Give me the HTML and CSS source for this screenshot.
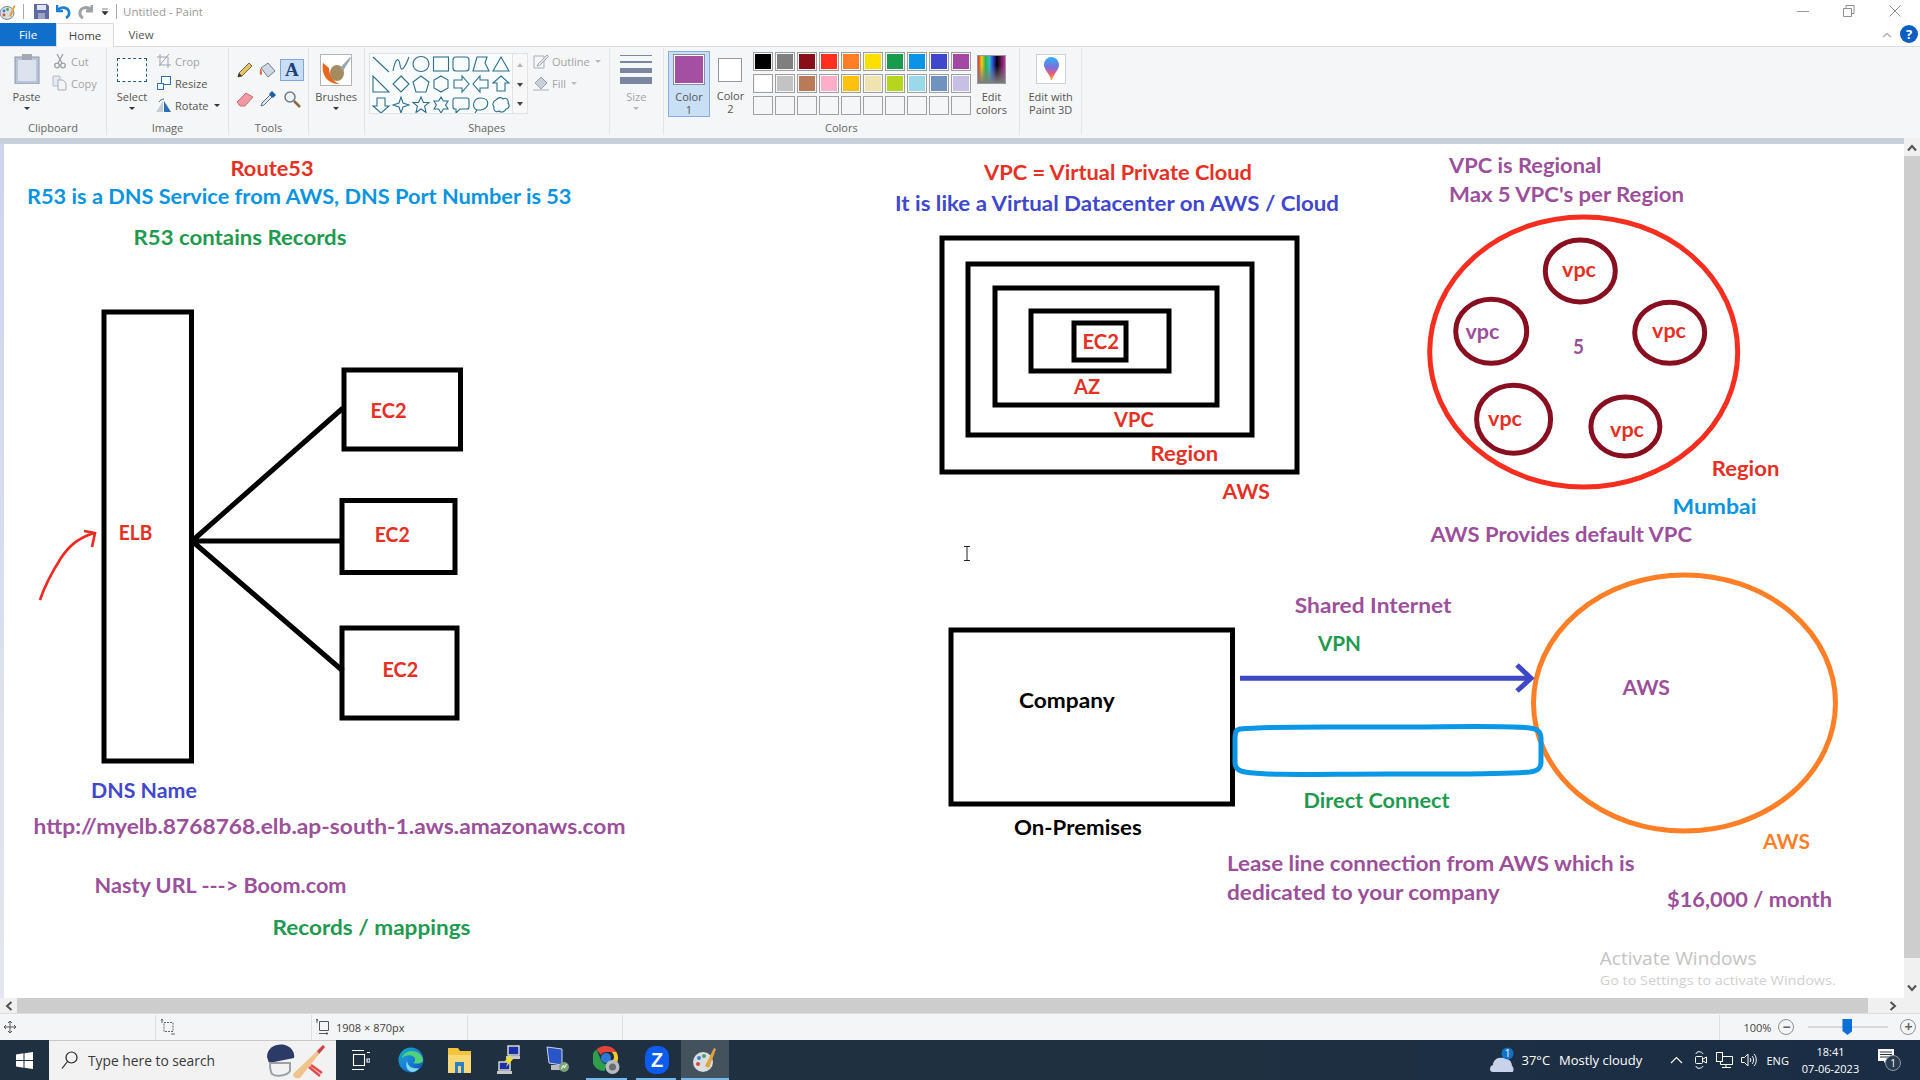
FILE: index.html
```html
<!DOCTYPE html>
<html lang="en">
<head>
<meta charset="utf-8">
<title>Untitled - Paint</title>
<link rel="stylesheet" href="styles.css">
</head>
<body>
<div class="window">
  <header class="titlebar">
    <svg class="app-icon" width="16" height="18" viewBox="0 0 16 18"><ellipse cx="7" cy="10" rx="7" ry="6.5" fill="#d8dde2" stroke="#7d8790"/><circle cx="4" cy="8" r="1.4" fill="#3a7fd0"/><circle cx="7.5" cy="6.5" r="1.4" fill="#46a84a"/><circle cx="4" cy="12" r="1.4" fill="#d9463c"/><path d="M9 13 14 2l1.5 1L11 14Z" fill="#e2a33c"/></svg>
    <span class="qa-sep qa-sep-a"></span>
    <svg class="qa qa-save" width="15" height="15" viewBox="0 0 15 15"><path d="M0 0h13l2 2v13H0Z" fill="#5f6aa5"/><rect x="3" y="1" width="9" height="5" fill="#dfe3f2"/><rect x="4" y="9" width="7" height="6" fill="#9aa2c8"/></svg>
    <svg class="qa qa-undo" width="15" height="15" viewBox="0 0 15 15"><path d="M1 1v6h6M2 6c3-4 10-3 11 2 .5 3-1 5-3 6" fill="none" stroke="#1c7fd6" stroke-width="2.6"/></svg>
    <svg class="qa qa-redo" width="15" height="15" viewBox="0 0 15 15"><path d="M14 1v6H8M13 6C10 2 3 3 2 8c-.5 3 1 5 3 6" fill="none" stroke="#9ea3a8" stroke-width="3"/></svg>
    <svg class="qa qa-drop" width="8" height="8" viewBox="0 0 8 8"><path d="M1 1h6M1 3.500h6L4 7Z" fill="#333" stroke="#333" stroke-width=".6"/></svg>
    <span class="qa-sep qa-sep-b"></span>
    <span class="doc-title">Untitled - Paint</span>
    <div class="win-controls">
      <svg width="12" height="12" viewBox="0 0 12 12"><path d="M0 6.500h12" stroke="#9a9a9a"/></svg>
      <svg width="12" height="12" viewBox="0 0 12 12"><path d="M.5 3.500h8v8h-8ZM3 3.500V.5h8v8H8.500" fill="none" stroke="#8f8f8f"/></svg>
      <svg width="12" height="12" viewBox="0 0 12 12"><path d="M.5.5l11 11M11.500.5l-11 11" stroke="#8f8f8f"/></svg>
    </div>
  </header>

  <nav class="tabs">
    <span class="tab tab-file">File</span>
    <span class="tab tab-home">Home</span>
    <span class="tab tab-view">View</span>
    <svg class="collapse" width="10" height="6" viewBox="0 0 10 6"><path d="M1 5 5 1.500 9 5" fill="none" stroke="#b0b0b0" stroke-width="1.600"/></svg>
    <span class="help">?</span>
  </nav>

  <div class="ribbon">
    <section class="group g-clipboard">
      <div class="group-body">
        <div class="big big-paste">
          <div class="ico"><svg width="26" height="30" viewBox="0 0 26 30"><rect x="1" y="3" width="24" height="27" fill="#b8c5d8" stroke="#8c97a8"/><rect x="4" y="6" width="18" height="21" fill="#dbe3ee"/><rect x="8" y="0" width="10" height="6" fill="#a3a9b2"/></svg></div>
          <span>Paste</span><i class="caret"></i>
        </div>
        <div class="small-col">
          <div class="small off"><svg width="16" height="16" viewBox="0 0 16 16"><path d="M5 1l5 9M11 1 6 10" stroke="#9aa0a6" stroke-width="1.300"/><circle cx="5" cy="12.500" r="2.300" fill="none" stroke="#9aa0a6" stroke-width="1.300"/><circle cx="11" cy="12.500" r="2.300" fill="none" stroke="#9aa0a6" stroke-width="1.300"/></svg><span>Cut</span></div>
          <div class="small off"><svg width="16" height="16" viewBox="0 0 16 16"><path d="M1 1h7v10H1Z" fill="#e6e9ee" stroke="#b5bcc6"/><path d="M6 5h5l3 3v7H6Z" fill="#f3f4f6" stroke="#a8afb9"/></svg><span>Copy</span></div>
        </div>
      </div>
      <div class="group-label">Clipboard</div>
    </section>

    <section class="group g-image">
      <div class="group-body">
        <div class="big big-select">
          <div class="ico"><span class="select-ico"></span></div>
          <span>Select</span><i class="caret"></i>
        </div>
        <div class="small-col">
          <div class="small off"><svg width="16" height="16" viewBox="0 0 16 16"><path d="M4 1v11h11M1 4h11v11M13 1 3 13" fill="none" stroke="#9aa4ad"/></svg><span>Crop</span></div>
          <div class="small"><svg width="16" height="16" viewBox="0 0 16 16"><rect x="5.500" y="1.500" width="9" height="8" fill="#fff" stroke="#2e74b5"/><rect x="1.500" y="8.500" width="6" height="6" fill="#fff" stroke="#2e74b5"/></svg><span>Resize</span></div>
          <div class="small"><svg width="16" height="16" viewBox="0 0 16 16"><path d="M7 15H0L7 4Z" fill="#c4ccd4"/><path d="M8 15h7L8 4Z" fill="#2f6fae"/><path d="M3 5c1-2 3-3 5-3" fill="none" stroke="#2f6fae"/></svg><span>Rotate</span><i class="caret caret-inline"></i></div>
        </div>
      </div>
      <div class="group-label">Image</div>
    </section>

    <section class="group g-tools">
      <div class="group-body tools-grid">
        <span class="tool"><svg width="18" height="18" viewBox="0 0 18 18"><path d="M2 16l1-4L13 2l3 3L6 15Z" fill="#e8c06a" stroke="#7a6a3a"/><path d="M2 16l1-4 3 3Z" fill="#333"/></svg></span>
        <span class="tool"><svg width="18" height="18" viewBox="0 0 18 18"><path d="M2 7l7-5 7 8-7 6Z" fill="#cfd8e4" stroke="#6d7f96"/><path d="M1 8c0 3-1 6 1 6s1-4 0-6Z" fill="#e0703a"/></svg></span>
        <span class="tool tool-on">A</span>
        <span class="tool"><svg width="18" height="18" viewBox="0 0 18 18"><path d="M1 12 10 3l7 4-8 9H4Z" fill="#f29aa3" stroke="#c86f77"/></svg></span>
        <span class="tool"><svg width="18" height="18" viewBox="0 0 18 18"><path d="M2 16l1-3 8-8 2 2-8 8Z" fill="#dbe7f2" stroke="#5d7187"/><path d="M10 4l3-3 4 4-3 3Z" fill="#1f5fa5"/></svg></span>
        <span class="tool"><svg width="18" height="18" viewBox="0 0 18 18"><circle cx="7" cy="7" r="5" fill="#eef3f8" stroke="#6f7a85" stroke-width="1.500"/><path d="M11 11l6 6" stroke="#8a6a3a" stroke-width="2.500"/></svg></span>
      </div>
      <div class="group-label">Tools</div>
    </section>

    <section class="group g-brushes">
      <div class="group-body">
        <div class="big">
          <div class="ico"><svg width="32" height="32" viewBox="0 0 32 32"><rect x=".5" y=".5" width="31" height="31" fill="#fff" stroke="#b5b5b5"/><path d="M3 9C1 20 7 30 19 30c-6-3-10-9-10-16Z" fill="#e8671e"/><ellipse cx="17" cy="19" rx="7" ry="8" fill="#a58a5f"/><path d="M20 14 30 3l1 1-8 13Z" fill="#9aa6ad"/></svg></div>
          <span>Brushes</span><i class="caret"></i>
        </div>
      </div>
      <div class="group-label">&nbsp;</div>
    </section>

    <section class="group g-shapes">
      <div class="group-body shapes-body">
        <svg class="gallery" width="142" height="59" viewBox="0 0 142 59">
          <g fill="none" stroke="#2d6e8e" stroke-width="1.100">
            <g transform="translate(11 10)"><path d="M-8-7 8 8"/></g>
            <g transform="translate(31 10)"><path d="M-8 7C-5-8-2-6-1 1S3 6 8-7"/></g>
            <g transform="translate(51 10)"><ellipse rx="8" ry="7.500"/></g>
            <g transform="translate(71 10)"><rect x="-7.500" y="-7" width="15" height="14"/></g>
            <g transform="translate(91 10)"><rect x="-8" y="-7" width="16" height="14" rx="3"/></g>
            <g transform="translate(111 10)"><path d="M-8 7-4-7H6L4-1 8 7Z"/></g>
            <g transform="translate(131 10)"><path d="M0-7 8 7H-8Z"/></g>
            <g transform="translate(11 30)"><path d="M-8-8V8H8Z"/></g>
            <g transform="translate(31 30)"><path d="M0-8 8 0 0 8-8 0Z"/></g>
            <g transform="translate(51 30)"><path d="M0-8 8-2 5 8H-5L-8-2Z"/></g>
            <g transform="translate(71 30)"><path d="M0-8 7-4V4L0 8-7 4V-4Z"/></g>
            <g transform="translate(91 30)"><path d="M-7-4H1V-8L8 0 1 8V4H-7Z"/></g>
            <g transform="translate(111 30)"><path d="M7-4H-1V-8L-8 0-1 8V4H7Z"/></g>
            <g transform="translate(131 30)"><path d="M-4 7V-1H-8L0-8 8-1H4V7Z"/></g>
            <g transform="translate(11 51)"><path d="M-4-7V1H-8L0 8 8 1H4V-7Z"/></g>
            <g transform="translate(31 51)"><path d="M0-8 2-2 8 0 2 2 0 8-2 2-8 0-2-2Z"/></g>
            <g transform="translate(51 51)"><path d="M0-8 2.400-2.500H8L3.600 1.200 5 7.500 0 4-5 7.500-3.600 1.200-8-2.500H-2.400Z"/></g>
            <g transform="translate(71 51)"><path d="M0-8 2.300-4H7L4.600 0 7 4H2.300L0 8-2.300 4H-7L-4.600 0-7-4H-2.300Z"/></g>
            <g transform="translate(91 51)"><path d="M-6-7H6Q8-7 8-5V2Q8 4 6 4H-1L-5 8V4H-6Q-8 4-8 2V-5Q-8-7-6-7Z"/></g>
            <g transform="translate(111 51)"><path d="M-4 5C-9 3-9-7 0-7S9 3 0 5C-1 5-3 5-4 5L-6 8Z"/></g>
            <g transform="translate(131 51)"><path d="M-5-5C-3-8 1-8 2-6 5-8 8-5 7-2 9 0 8 4 5 4 4 7 0 8-2 6-5 8-8 5-7 2-9 0-8-4-5-5Z"/></g>
          </g>
        </svg>
        <div class="gallery-scroll">
          <i class="mini mini-up"></i><i class="mini mini-down"></i><i class="mini mini-more"></i>
        </div>
        <div class="small-col outline-col">
          <div class="small off"><svg width="16" height="16" viewBox="0 0 16 16"><path d="M1 3h10v12H1Z" fill="none" stroke="#a9b0b8"/><path d="M5 11l9-9 1.500 1.500-9 9L4 13Z" fill="#e6e9ec" stroke="#a0a7ae"/></svg><span>Outline</span><i class="caret caret-inline caret-off"></i></div>
          <div class="small off"><svg width="16" height="16" viewBox="0 0 16 16"><path d="M2 8l6-6 6 6-6 6Z" fill="#c7cfd8" stroke="#a0a7ae"/><path d="M0 14h16v2H0Z" fill="#d0d4d8"/></svg><span>Fill</span><i class="caret caret-inline caret-off"></i></div>
        </div>
      </div>
      <div class="group-label">Shapes</div>
    </section>

    <section class="group g-size">
      <div class="group-body">
        <div class="big off">
          <div class="ico"><span class="size-ico"><i class="sz1"></i><i class="sz2"></i><i class="sz3"></i><i class="sz4"></i></span></div>
          <span>Size</span><i class="caret caret-off"></i>
        </div>
      </div>
      <div class="group-label">&nbsp;</div>
    </section>

    <section class="group g-colors">
      <div class="group-body colors-body">
        <div class="big color-btn color-btn-on">
          <div class="ico"><span class="color-one"></span></div>
          <span>Color<br>1</span>
        </div>
        <div class="big color-btn">
          <div class="ico"><span class="color-two"></span></div>
          <span>Color<br>2</span>
        </div>
        <div class="palette">
          <i class="c-000"></i><i class="c-7f7"></i><i class="c-880"></i><i class="c-red"></i><i class="c-org"></i><i class="c-yel"></i><i class="c-grn"></i><i class="c-blu"></i><i class="c-ind"></i><i class="c-pur"></i>
          <i class="c-fff"></i><i class="c-c3c"></i><i class="c-bro"></i><i class="c-pnk"></i><i class="c-gld"></i><i class="c-cre"></i><i class="c-lim"></i><i class="c-tur"></i><i class="c-ste"></i><i class="c-lav"></i>
          <i></i><i></i><i></i><i></i><i></i><i></i><i></i><i></i><i></i><i></i>
        </div>
        <div class="big edit-colors">
          <div class="ico"><span class="rainbow"></span></div>
          <span>Edit<br>colors</span>
        </div>
      </div>
      <div class="group-label">Colors</div>
    </section>

    <section class="group g-3d">
      <div class="group-body">
        <div class="big">
          <div class="ico"><svg width="30" height="30" viewBox="0 0 30 30"><defs><linearGradient id="p3d" x1="0" y1="0" x2="0" y2="1"><stop offset="0" stop-color="#2fb2f0"/><stop offset=".45" stop-color="#7a6fe0"/><stop offset=".75" stop-color="#ee5d6c"/><stop offset="1" stop-color="#f7b23c"/></linearGradient></defs><rect x=".5" y=".5" width="29" height="29" fill="#fff" stroke="#d0d0d0"/><path d="M15 3c5 0 8 4 8 8 0 5-5 8-7 15h-1c-1-6-7-10-7-15 0-4 3-8 7-8Z" fill="url(#p3d)"/></svg></div>
          <span>Edit with<br>Paint 3D</span>
        </div>
      </div>
      <div class="group-label">&nbsp;</div>
    </section>
  </div>

  <main class="workspace">
    <div class="canvas-wrap">
      <svg class="canvas" width="1900" height="854" viewBox="4 144 1900 854">
        <g class="ink-black">
          <rect x="104" y="312" width="87.500" height="449"/>
          <rect x="344" y="370" width="116.500" height="79"/>
          <rect x="342" y="500.500" width="113" height="72"/>
          <rect x="342" y="628" width="115" height="90"/>
          <path d="M192 541 343 408M192 541H342M192 541 343 671"/>
          <rect x="942" y="238" width="355" height="234"/>
          <rect x="968" y="264" width="284" height="171"/>
          <rect x="995" y="288" width="222" height="117"/>
          <rect x="1031" y="311" width="138" height="60"/>
          <rect x="1074" y="323" width="52" height="37"/>
          <rect x="951" y="630" width="281.500" height="174"/>
        </g>
        <path class="ink-red-thin" d="M40 600C44 588 52 572 61 558 69 546 78 538 94 533M84 531l11 2-3 14"/>
        <ellipse class="ink-red" cx="1583.700" cy="352" rx="154" ry="135"/>
        <g class="ink-maroon">
          <ellipse cx="1580.300" cy="271" rx="35" ry="31"/>
          <ellipse cx="1491.200" cy="331.300" rx="35.500" ry="32"/>
          <ellipse cx="1669.700" cy="332.700" rx="35" ry="30.500"/>
          <ellipse cx="1513.600" cy="419.200" rx="37" ry="34"/>
          <ellipse cx="1625.400" cy="426.500" rx="34.500" ry="29.500"/>
        </g>
        <ellipse class="ink-orange" cx="1684.500" cy="703" rx="151" ry="128"/>
        <path class="ink-blue" d="M1240 729C1270 726 1310 727 1388 727 1450 727 1510 725 1530 728 1538 729 1541 732 1541 738V762C1541 768 1538 771 1530 772 1500 775 1450 774 1388 774 1320 774 1270 776 1245 772 1238 771 1235 768 1235 762V740C1235 732 1236 730 1240 729Z"/>
        <path class="ink-indigo" d="M1240 678.300H1529M1517 665l14 13.300-14 12.700"/>

        <g class="t">
          <text class="red" x="230.600" y="176.300" textLength="83" lengthAdjust="spacingAndGlyphs">Route53</text>
          <text class="sky" x="27" y="204" textLength="544.500" lengthAdjust="spacingAndGlyphs">R53 is a DNS Service from AWS, DNS Port Number is 53</text>
          <text class="green" x="133.500" y="245" textLength="213" lengthAdjust="spacingAndGlyphs">R53 contains Records</text>
          <text class="red" x="118.800" y="539.700" textLength="33.500" lengthAdjust="spacingAndGlyphs">ELB</text>
          <text class="red" x="370.600" y="417.700" textLength="36" lengthAdjust="spacingAndGlyphs">EC2</text>
          <text class="red" x="374.700" y="541.700" textLength="35" lengthAdjust="spacingAndGlyphs">EC2</text>
          <text class="red" x="382.500" y="676.700" textLength="35.700" lengthAdjust="spacingAndGlyphs">EC2</text>
          <text class="indigo" x="91" y="798.300" textLength="105.800" lengthAdjust="spacingAndGlyphs">DNS Name</text>
          <text class="purple" x="33.500" y="834" textLength="592" lengthAdjust="spacingAndGlyphs">http://myelb.8768768.elb.ap-south-1.aws.amazonaws.com</text>
          <text class="purple" x="94.500" y="892.700" textLength="252" lengthAdjust="spacingAndGlyphs">Nasty URL ---&gt; Boom.com</text>
          <text class="green" x="272.500" y="935" textLength="198" lengthAdjust="spacingAndGlyphs">Records / mappings</text>

          <text class="red" x="984" y="180" textLength="268" lengthAdjust="spacingAndGlyphs">VPC = Virtual Private Cloud</text>
          <text class="indigo" x="895" y="210.700" textLength="444" lengthAdjust="spacingAndGlyphs">It is like a Virtual Datacenter on AWS / Cloud</text>
          <text class="red" x="1082.500" y="349" textLength="36.500" lengthAdjust="spacingAndGlyphs">EC2</text>
          <text class="red" x="1074" y="394" textLength="26" lengthAdjust="spacingAndGlyphs">AZ</text>
          <text class="red" x="1114" y="427" textLength="39.700" lengthAdjust="spacingAndGlyphs">VPC</text>
          <text class="red" x="1150.500" y="460.700" textLength="67.600" lengthAdjust="spacingAndGlyphs">Region</text>
          <text class="red" x="1222.600" y="498.700" textLength="47.400" lengthAdjust="spacingAndGlyphs">AWS</text>

          <text class="purple" x="1449" y="173" textLength="152.500" lengthAdjust="spacingAndGlyphs">VPC is Regional</text>
          <text class="purple" x="1449" y="202" textLength="235" lengthAdjust="spacingAndGlyphs">Max 5 VPC's per Region</text>
          <text class="red" x="1562" y="276.700" textLength="34" lengthAdjust="spacingAndGlyphs">vpc</text>
          <text class="purple" x="1465.400" y="339" textLength="34" lengthAdjust="spacingAndGlyphs">vpc</text>
          <text class="red" x="1652" y="338" textLength="34" lengthAdjust="spacingAndGlyphs">vpc</text>
          <text class="red" x="1488" y="425.700" textLength="34" lengthAdjust="spacingAndGlyphs">vpc</text>
          <text class="red" x="1610" y="436.700" textLength="34" lengthAdjust="spacingAndGlyphs">vpc</text>
          <text class="purple" x="1573" y="354" textLength="11" lengthAdjust="spacingAndGlyphs">5</text>
          <text class="red" x="1711.700" y="475.700" textLength="67.700" lengthAdjust="spacingAndGlyphs">Region</text>
          <text class="sky" x="1672.500" y="514.300" textLength="84" lengthAdjust="spacingAndGlyphs">Mumbai</text>
          <text class="purple" x="1430.400" y="541.700" textLength="261.600" lengthAdjust="spacingAndGlyphs">AWS Provides default VPC</text>

          <text class="purple" x="1294.800" y="612.700" textLength="156.700" lengthAdjust="spacingAndGlyphs">Shared Internet</text>
          <text class="green" x="1318" y="650.700" textLength="43" lengthAdjust="spacingAndGlyphs">VPN</text>
          <text class="black" x="1019" y="707.700" textLength="95.700" lengthAdjust="spacingAndGlyphs">Company</text>
          <text class="black" x="1014" y="835.300" textLength="127.700" lengthAdjust="spacingAndGlyphs">On-Premises</text>
          <text class="purple" x="1622.400" y="695" textLength="47.600" lengthAdjust="spacingAndGlyphs">AWS</text>
          <text class="green" x="1303.500" y="807.700" textLength="146" lengthAdjust="spacingAndGlyphs">Direct Connect</text>
          <text class="orange" x="1763" y="849.300" textLength="47" lengthAdjust="spacingAndGlyphs">AWS</text>
          <text class="purple" x="1227" y="870.700" textLength="407.600" lengthAdjust="spacingAndGlyphs">Lease line connection from AWS which is</text>
          <text class="purple" x="1227" y="900" textLength="272.600" lengthAdjust="spacingAndGlyphs">dedicated to your company</text>
          <text class="purple" x="1667" y="906.700" textLength="165" lengthAdjust="spacingAndGlyphs">$16,000 / month</text>
        </g>
        <text class="wm wm-a" x="1599.700" y="965" textLength="156.800" lengthAdjust="spacingAndGlyphs">Activate Windows</text>
        <text class="wm wm-b" x="1599.700" y="985" textLength="236" lengthAdjust="spacingAndGlyphs">Go to Settings to activate Windows.</text>
        <path class="ibeam" d="M964 546.500h6M967 546.500v14M964 560.500h6"/>
      </svg>
    </div>
    <div class="vscroll">
      <span class="sb-btn"><svg width="10" height="8" viewBox="0 0 10 8"><path d="M1 6.500 5 2l4 4.500" fill="none" stroke="#505050" stroke-width="2"/></svg></span>
      <span class="sb-thumb"></span>
      <span class="sb-btn sb-btn-end"><svg width="10" height="8" viewBox="0 0 10 8"><path d="M1 1.500 5 6l4-4.500" fill="none" stroke="#505050" stroke-width="2"/></svg></span>
    </div>
  </main>

  <div class="hscroll">
    <span class="hs-btn"><svg width="8" height="10" viewBox="0 0 8 10"><path d="M6.500 1 2 5l4.500 4" fill="none" stroke="#505050" stroke-width="2"/></svg></span>
    <span class="hs-thumb"></span>
    <span class="hs-rest"><svg width="8" height="10" viewBox="0 0 8 10"><path d="M1.500 1 6 5 1.500 9" fill="none" stroke="#505050" stroke-width="2"/></svg></span>
  </div>

  <footer class="statusbar">
    <span class="st st-a"><svg width="14" height="14" viewBox="0 0 14 14"><path d="M7 1v12M1 7h12M5 3l2-2 2 2M5 11l2 2 2-2M3 5 1 7l2 2M11 5l2 2-2 2" fill="none" stroke="#555"/></svg></span>
    <span class="st st-b"><svg width="14" height="16" viewBox="0 0 14 16"><path d="M3 3.500h9v9H3Z" fill="none" stroke="#666" stroke-dasharray="2 1"/><path d="M1 0v4M0 1.500 1 0l1 1.500M10 15h4" stroke="#666" fill="none"/></svg></span>
    <span class="st st-c"><svg width="14" height="16" viewBox="0 0 14 16"><path d="M3.500 2.500h9v9h-9Z" fill="none" stroke="#555"/><path d="M1 0v4M0 1.500 1 0l1 1.500M3 14.500h9M10.500 13.500l1.500 1-1.500 1" stroke="#555" fill="none"/></svg><b>1908 × 870px</b></span>
    <span class="st st-d"></span>
    <span class="st st-e"></span>
    <span class="zoom">
      <b>100%</b>
      <span class="z-btn z-minus">−</span>
      <span class="z-track"><i class="z-thumb"></i></span>
      <span class="z-btn z-plus">+</span>
    </span>
  </footer>

  <div class="taskbar">
    <div class="start"><svg width="17" height="17" viewBox="0 0 17 17"><path d="M0 2.500 7.500 1.300V8H0ZM8.500 1.200 17 0V8H8.500ZM0 9h7.500v6.700L0 14.500ZM8.500 9H17v8l-8.500-1.200Z" fill="#fff"/></svg></div>
    <div class="search">
      <svg width="17" height="19" viewBox="0 0 17 19"><circle cx="10.500" cy="6.500" r="5.500" fill="none" stroke="#222" stroke-width="1.200"/><path d="M6.500 10.500 1 17.500" stroke="#222" stroke-width="1.200"/></svg>
      <span>Type here to search</span>
      <svg class="cricket" width="60" height="36" viewBox="0 0 60 36"><path d="M28 31 52 8l6-6 2 2-6 7L35 35c-3 1-7 0-7-4Z" fill="#eec48c"/><path d="M52 8l6-6 2 2-6 7Z" fill="#c8444a"/><path d="M2 14C2 4 12 0 20 2c7 2 10 8 9 13L4 20Z" fill="#2c3a66"/><path d="M5 20h20v8c-3 5-14 6-18 3-2-3-2-7-2-11Z" fill="none" stroke="#9aa0a6" stroke-width="2"/><circle cx="50" cy="28" r="7" fill="#f2f2f2"/><path d="M44 24 55 33M46 22 57 30" stroke="#e5484d" stroke-width="2.500"/></svg>
    </div>
    <div class="task task-first"><svg width="18" height="22" viewBox="0 0 18 22"><path d="M0 1.500h12M0 20.500h12M1.500 5.500h11v11h-11ZM15 3.500h3M15 10h3v3h-3Z" fill="none" stroke="#fff" stroke-width="1.100"/></svg></div>
    <div class="task"><svg width="26" height="26" viewBox="0 0 26 26"><defs><linearGradient id="edge" x1="0" y1="0" x2="1" y2="1"><stop offset="0" stop-color="#0fb1c4"/><stop offset=".5" stop-color="#1a7fd8"/><stop offset="1" stop-color="#0c4fa8"/></linearGradient></defs><circle cx="13" cy="13" r="12.500" fill="url(#edge)"/><path d="M25 14c0-6-5-10-11-10C9 4 5 7 4 11c3-3 9-4 12-1 2 2 1 5-1 6 4 1 8 1 10-2Z" fill="#4fd27a"/><path d="M14 25c-5-1-7-6-5-11 1 6 6 8 12 7-2 3-5 4-7 4Z" fill="#7fd8f0"/></svg></div>
    <div class="task"><svg width="23" height="26" viewBox="0 0 23 26"><path d="M0 1h10l2 3h11v22H0Z" fill="#f3c33f"/><path d="M0 8h23v18H0Z" fill="#f8d775"/><path d="M7 15h9v11H7Z" fill="#2a7fc8"/><path d="M10 19h3v7h-3Z" fill="#f8d775"/></svg></div>
    <div class="task"><svg width="24" height="30" viewBox="0 0 24 30"><rect x="11" y="1" width="11" height="9" fill="#1a2fa8" stroke="#d8d8d8" stroke-width="1.500"/><rect x="9" y="11" width="14" height="3" fill="#c8c8c8"/><rect x="2" y="17" width="11" height="8" fill="#1a2fa8" stroke="#d8d8d8" stroke-width="1.500"/><rect x="0" y="26" width="15" height="3" fill="#c8c8c8"/><path d="M14 9 7 17l4-1-2 6 8-9-4 1Z" fill="#f7e21c"/></svg></div>
    <div class="task"><svg width="24" height="28" viewBox="0 0 24 28"><path d="M1 1 16 3v16L3 17Z" fill="#2a55c8" stroke="#c8d4e8"/><path d="M5 19h14l3 5H5Z" fill="#b8bcc0"/><circle cx="18" cy="21" r="5" fill="#7aa378"/><path d="M15.500 23l2-4 1 3 2-4" stroke="#fff" fill="none"/></svg></div>
    <div class="task"><svg width="28" height="30" viewBox="0 0 28 30"><path d="M13 1a12 12 0 0 1 10.400 6H13a6 6 0 0 0-5.200 3L3.500 4.500A12 12 0 0 1 13 1Z" fill="#e2443a"/><path d="M23.400 7A12 12 0 0 1 14 25l5-8.500A6 6 0 0 0 18.500 7Z" fill="#f8c92c"/><path d="M3.500 4.500 8.400 16A6 6 0 0 0 14 19l-2.500 6.900A12 12 0 0 1 3.500 4.500Z" fill="#2f9e4a"/><circle cx="13" cy="13" r="5" fill="#2f78d8"/><circle cx="19.500" cy="22" r="7" fill="#b8bcc0"/><circle cx="19.500" cy="22" r="3.500" fill="#6a6e72"/></svg></div>
    <div class="task"><svg width="24" height="28" viewBox="0 0 24 28"><rect x="0" y="0" width="24" height="28" rx="10" fill="#0c5cf0"/><text class="zoom-z" x="12" y="21">Z</text></svg></div>
    <div class="task task-on"><svg width="24" height="28" viewBox="0 0 24 28"><ellipse cx="10" cy="16" rx="10" ry="10" fill="#d9dee3"/><circle cx="6" cy="12" r="2" fill="#3a7fd0"/><circle cx="11" cy="10" r="2" fill="#46a84a"/><circle cx="5" cy="18" r="2" fill="#d9463c"/><path d="M12 20 21 2l2 1-7 19Z" fill="#e2a33c"/></svg></div>
    <div class="tray">
      <svg class="tr-cloud" width="24" height="26" viewBox="0 0 24 26"><path d="M3 25c-4 0-4-6 0-7 0-4 4-8 9-7 5-1 10 3 10 8 2 1 2 6 0 6Z" fill="#c8d2ea"/><circle cx="17.500" cy="6.500" r="6" fill="#1272c4"/><text class="badge-n" x="17.500" y="10">1</text></svg>
      <span class="tr-temp">37°C</span>
      <span class="tr-wx">Mostly cloudy</span>
      <svg class="tr-chev" width="13" height="8" viewBox="0 0 13 8"><path d="M1 7 6.500 1.500 12 7" fill="none" stroke="#fff" stroke-width="1.100"/></svg>
      <svg class="tr-cam" width="12" height="18" viewBox="0 0 12 18"><path d="M1 3c0-3 6-3 7 0M1 15c0 3 6 3 7 0" fill="none" stroke="#fff"/><rect x=".5" y="5.500" width="7" height="7" rx="1" fill="none" stroke="#fff"/><path d="M8 8l3.500-2v6L8 10" fill="none" stroke="#fff"/></svg>
      <svg class="tr-net" width="17" height="16" viewBox="0 0 17 16"><path d="M4.500 4.500h12v8h-12ZM10 12.500v3M6 15.500h9" fill="none" stroke="#fff"/><rect x=".5" y=".5" width="6" height="9" fill="#1f3040" stroke="#fff"/></svg>
      <svg class="tr-snd" width="16" height="14" viewBox="0 0 16 14"><path d="M.5 4.500h3L7 1v12L3.500 9.500h-3Z" fill="none" stroke="#fff"/><path d="M9 5c1 1 1 3 0 4M11 3c2 2 2 6 0 8M13 1c3 3 3 9 0 12" fill="none" stroke="#fff"/></svg>
      <span class="tr-lang">ENG</span>
      <span class="tr-clock"><span>18:41</span><span>07-06-2023</span></span>
      <svg class="tr-note" width="26" height="24" viewBox="0 0 26 24"><path d="M0 1h16v12H8l-2 2v-2H0Z" fill="#fff"/><path d="M2 4h12M2 6.500h12M2 9h12" stroke="#1f3040"/><circle cx="15" cy="15" r="7.500" fill="#2a3b4e" stroke="#8a98a6"/><text class="badge-n" x="15" y="18.500">1</text></svg>
    </div>
    <i class="run run-a"></i><i class="run run-b"></i><i class="run run-c"></i>
  </div>
</div>
</body>
</html>
```

FILE: styles.css
```css
* { box-sizing: border-box; }
html, body { margin: 0; padding: 0; width: 1920px; height: 1080px; overflow: hidden; background: #fff; }
body { font-family: "Open Sans", "Liberation Sans", sans-serif; font-size: 11px; color: #555; }
.window { position: relative; display: flex; flex-direction: column; width: 1920px; height: 1080px; }
svg { display: block; flex: none; }

/* title bar */
.titlebar { display: flex; align-items: center; height: 23px; background: #fff; }
.qa-sep { width: 1px; height: 15px; background: #aaa; flex: none; }
.qa-sep-a { margin-left: 7px; }
.qa-save { margin-left: 10px; }
.qa-undo { margin-left: 7px; }
.qa-redo { margin-left: 7px; }
.qa-drop { margin-left: 8px; }
.qa-sep-b { margin-left: 7px; }
.doc-title { margin-left: 6px; font-size: 11.500px; color: #9a9a9a; }
.win-controls { display: flex; margin-left: auto; padding-right: 19px; gap: 34px; }
.win-controls svg { margin-top: -2px; }

/* tabs */
.tabs { display: flex; align-items: stretch; height: 24px; border-bottom: 1px solid #dadbdc; }
.tab { display: flex; align-items: center; justify-content: center; font-size: 11.500px; }
.tab-file { width: 56px; background: #0f6fcb; color: #fff; }
.tab-home { width: 58px; background: #fbfbfc; border: 1px solid #dadbdc; border-bottom: 0; color: #444; height: 24px; }
.tab-view { width: 54px; color: #555; }
.collapse { margin: 9px 0 0 auto; }
.help { width: 18px; height: 18px; margin: 2px 2px 0 8px; border-radius: 50%; background: #0c5fc2; color: #fff; font-weight: 700; font-size: 13px; line-height: 18px; text-align: center; }

/* ribbon */
.ribbon { display: flex; height: 91px; background: #f5f6f7; }
.group { display: flex; flex-direction: column; flex: none; height: 87px; margin-top: 1px; border-right: 1px solid #e3e4e6; }
.group-body { display: flex; height: 75px; padding-top: 3px; }
.group-label { height: 14px; line-height: 14px; text-align: center; color: #666; }
.g-clipboard { width: 107px; }
.g-image { width: 122px; }
.g-tools { width: 80px; }
.g-brushes { width: 55.500px; }
.g-shapes { width: 245.500px; }
.g-size { width: 53.700px; }
.g-colors { width: 356.300px; }
.g-3d { width: 62.400px; }

.big { display: flex; flex-direction: column; align-items: center; width: 100%; padding-top: 3px; line-height: 13px; text-align: center; color: #555; }
.ico { display: flex; justify-content: center; align-items: flex-start; height: 36px; }
.off, .off span { color: #a3a3a3; }
.caret { display: block; width: 0; height: 0; margin-top: 4px; border: 3px solid transparent; border-top: 3.500px solid #333; border-bottom: 0; }
.caret-inline { margin: 0 0 0 2px; }
.caret-off { border-top-color: #b8b8b8; }

.g-clipboard .group-body { padding-left: 13px; }
.big-paste { width: 27px; flex: none; }
.small-col { display: flex; flex-direction: column; margin: -1px 0 0 12px; }
.small { display: flex; align-items: center; gap: 3px; height: 22px; color: #555; white-space: nowrap; }

.g-image .group-body { padding-left: 5px; }
.big-select { width: 40px; flex: none; }
.select-ico { display: block; width: 30px; height: 24px; margin-top: 4px; background: #fff; border: 1px dashed #24588f; }
.g-image .small-col { margin-left: 4px; }

.tools-grid { display: grid; grid-template-columns: repeat(3, 23.500px); grid-auto-rows: 22px; row-gap: 7px; padding: 11px 0 0 4px; }
.tool { display: flex; align-items: center; justify-content: center; }
.tool-on { background: #c9def5; border: 1px solid #7fa8d8; font-family: "Liberation Serif", serif; font-weight: 700; font-size: 19px; color: #1c3f78; }

.shapes-body { padding-left: 4.500px; padding-top: 5px; }
.gallery { box-sizing: content-box; background: #f9fcfd; border: 1px solid #dfe3e6; }
.gallery-scroll { display: flex; flex-direction: column; justify-content: space-between; align-items: center; width: 14.500px; height: 61px; padding: 9px 0 7px; background: #f8f8f9; border: 1px solid #dfe3e6; border-left: 0; }
.mini { display: block; width: 0; height: 0; border: 3px solid transparent; }
.mini-up { border-bottom: 4px solid #b5b5b5; border-top: 0; }
.mini-down { border-top: 4px solid #444; border-bottom: 0; }
.mini-more { border-top: 4px solid #444; border-bottom: 0; box-shadow: 0 -3px 0 -2px #444; }
.outline-col { margin: -3px 0 0 5.500px; }

.size-ico { display: flex; flex-direction: column; width: 32px; margin-top: 1px; }
.size-ico i { display: block; background: #7b87a0; }
.sz1 { height: 1px; margin-bottom: 5px; }
.sz2 { height: 2px; margin-bottom: 5px; }
.sz3 { height: 5px; margin-bottom: 4px; }
.sz4 { height: 7px; }

.colors-body { padding-left: 4.300px; }
.color-btn { width: 41px; flex: none; height: 66px; padding-top: 2px; }
.color-btn-on { width: 42px; background: #c9dff5; border: 1px solid #86aedb; }
.color-one { display: block; width: 32px; height: 31px; background: #a54fa2; border: 1px solid #8a8fa0; box-shadow: inset 0 0 0 1px #fff; }
.color-two { display: block; width: 24px; height: 24px; margin-top: 5px; background: #fff; border: 1px solid #999; }
.palette { display: grid; grid-template-columns: repeat(10, 20px); grid-auto-rows: 19px; gap: 3px 2px; margin: 1px 0 0 2px; flex: none; align-content: start; }
.palette i { display: block; border: 1px solid #a0a0a0; background: #f5f6f7; box-shadow: inset 0 0 0 1px #f5f6f7; }
.c-000 { background: #000 !important; } .c-7f7 { background: #7f7f7f !important; } .c-880 { background: #880f1a !important; } .c-red { background: #ff2f1f !important; } .c-org { background: #ff7f27 !important; } .c-yel { background: #ffdf00 !important; } .c-grn { background: #1a9a4c !important; } .c-blu { background: #0a94e8 !important; } .c-ind { background: #3f48cc !important; } .c-pur { background: #a349a4 !important; }
.c-fff { background: #fff !important; } .c-c3c { background: #c3c3c3 !important; } .c-bro { background: #b97a57 !important; } .c-pnk { background: #ffaec9 !important; } .c-gld { background: #ffc10e !important; } .c-cre { background: #efe4b0 !important; } .c-lim { background: #b5d61d !important; } .c-tur { background: #99d9ea !important; } .c-ste { background: #7092be !important; } .c-lav { background: #c8bfe7 !important; }
.edit-colors { width: 38px; flex: none; margin-left: 1.500px; }
.rainbow { display: block; width: 29px; height: 29px; margin-top: 1px; border: 1px solid #9a9a9a; background: linear-gradient(180deg, rgba(255,255,255,0) 35%, #7d7d7d 100%), linear-gradient(90deg, #e03030, #e8d020, #30b040, #30c0d0, #3040d0, #000 70%, #c030a0); }

/* workspace */
.workspace { display: flex; height: 860px; background: #fff; }
.canvas-wrap { flex: none; width: 1904px; height: 860px; padding: 6px 0 0 4px; background: linear-gradient(180deg, #c5d0db 6px, #cdd5ea 7px, #e6e6f2 100%); }
.canvas { background: #fff; overflow: hidden; }
.ink-black { fill: none; stroke: #000; stroke-width: 5; }
.ink-red { fill: none; stroke: #f62e20; stroke-width: 5; }
.ink-red-thin { fill: none; stroke: #ec2a20; stroke-width: 2.600; }
.ink-maroon { fill: none; stroke: #880f1f; stroke-width: 5; }
.ink-orange { fill: none; stroke: #ff7f27; stroke-width: 5; }
.ink-blue { fill: none; stroke: #0a97e6; stroke-width: 5; }
.ink-indigo { fill: none; stroke: #4047c4; stroke-width: 5; }
.ibeam { fill: none; stroke: #222; stroke-width: 1; }
.t text { font-family: Lato, "Liberation Sans", sans-serif; font-weight: 700; font-size: 20px; }
.red { fill: #e53025; }
.sky { fill: #0a94e0; }
.green { fill: #1f9a50; }
.indigo { fill: #3f48cc; }
.purple { fill: #9c4f9a; }
.black { fill: #000; }
.orange { fill: #ff7f27; }
.wm { font-family: "Open Sans", "Liberation Sans", sans-serif; fill: #c4c4c4; }
.wm-a { font-size: 19px; }
.wm-b { font-size: 13.500px; fill: #d0d0d0; }

.vscroll { display: flex; flex-direction: column; width: 16px; height: 860px; padding-top: 2px; background: #f0f0f0; border-top: 0; }
.sb-btn { display: flex; align-items: center; justify-content: center; height: 16px; flex: none; }
.sb-thumb { display: block; height: 802px; flex: none; background: #cdcdcd; }
.sb-btn-end { height: 40px; padding-top: 20px; }

.hscroll { display: flex; height: 16px; border-bottom: 1px solid #dcdcdc; background: #f0f0f0; }
.hs-btn { display: flex; align-items: center; justify-content: center; width: 17px; }
.hs-thumb { display: block; width: 1851px; background: #cdcdcd; }
.hs-rest { display: flex; align-items: center; justify-content: center; flex: 1; padding-right: 3px; }

/* status bar */
.statusbar { display: flex; align-items: center; height: 26px; background: #f4f5f6; }
.st { display: flex; align-items: center; height: 25px; flex: none; border-right: 1px solid #dfdfdf; }
.st b, .zoom b { font-weight: 400; color: #444; }
.st-a { width: 156px; padding-left: 3px; }
.st-b { width: 156px; padding-left: 5px; }
.st-c { width: 155.500px; padding-left: 4px; gap: 6px; }
.st-d { width: 155.500px; }
.st-e { width: 1096.500px; }
.zoom { display: flex; align-items: center; flex: 1; padding-left: 24px; }
.z-btn { display: block; width: 16px; height: 16px; flex: none; border: 1px solid #8f8f8f; border-radius: 50%; font-size: 14px; font-weight: 700; line-height: 13px; text-align: center; color: #666; }
.z-minus { margin-left: 7px; }
.z-track { position: relative; display: block; width: 80px; height: 2px; margin-left: 14px; background: #d8d8d8; }
.z-thumb { position: absolute; left: 34px; top: -7px; width: 10px; height: 16px; background: #0b6fd8; clip-path: polygon(0 0, 100% 0, 100% 75%, 50% 100%, 0 75%); }
.z-plus { margin-left: 12px; }

/* taskbar */
.taskbar { position: relative; display: flex; align-items: center; height: 40px; background: linear-gradient(90deg, #1f3040, #1f3040 60%, #1a2d45); }
.start { display: flex; align-items: center; justify-content: center; width: 48.500px; height: 40px; }
.search { display: flex; align-items: center; gap: 10.500px; width: 287px; height: 40px; padding: 0 11px 0 12px; background: #f2f2f2; border-top: 1px solid #c8c8c8; font-size: 13.800px; color: #3a3a3a; }
.cricket { margin-left: auto; }
.task { display: flex; align-items: center; justify-content: center; width: 49.200px; height: 40px; flex: none; }
.task-first { width: 50.500px; }
.task-on { width: 48px; background: #44525e; }
.zoom-z { font-family: "Liberation Sans", sans-serif; font-weight: 700; font-size: 20px; fill: #fff; text-anchor: middle; }
.badge-n { font-family: "Open Sans", sans-serif; font-size: 10px; fill: #fff; text-anchor: middle; }
.tray { display: flex; align-items: center; height: 40px; margin-left: auto; width: 430.500px; flex: none; color: #fff; font-size: 13px; }
.tr-temp { width: 28.500px; margin-left: 8px; white-space: nowrap; }
.tr-wx { width: 86px; margin-left: 9px; white-space: nowrap; }
.tr-chev { margin-left: 24.500px; }
.tr-cam { margin-left: 12.500px; }
.tr-net { margin-left: 9px; }
.tr-snd { margin-left: 8px; }
.tr-lang { width: 22.500px; margin-left: 9.500px; font-size: 11px; }
.tr-clock { display: flex; flex-direction: column; align-items: center; width: 62px; margin-left: 10.500px; font-size: 11px; line-height: 17px; }
.tr-note { margin-left: 16px; }
.run { position: absolute; bottom: 0; display: block; height: 2px; background: #76b9ed; }
.run-a { left: 586px; width: 41px; }
.run-b { left: 636px; width: 40px; }
.run-c { left: 681px; width: 48px; }
```
